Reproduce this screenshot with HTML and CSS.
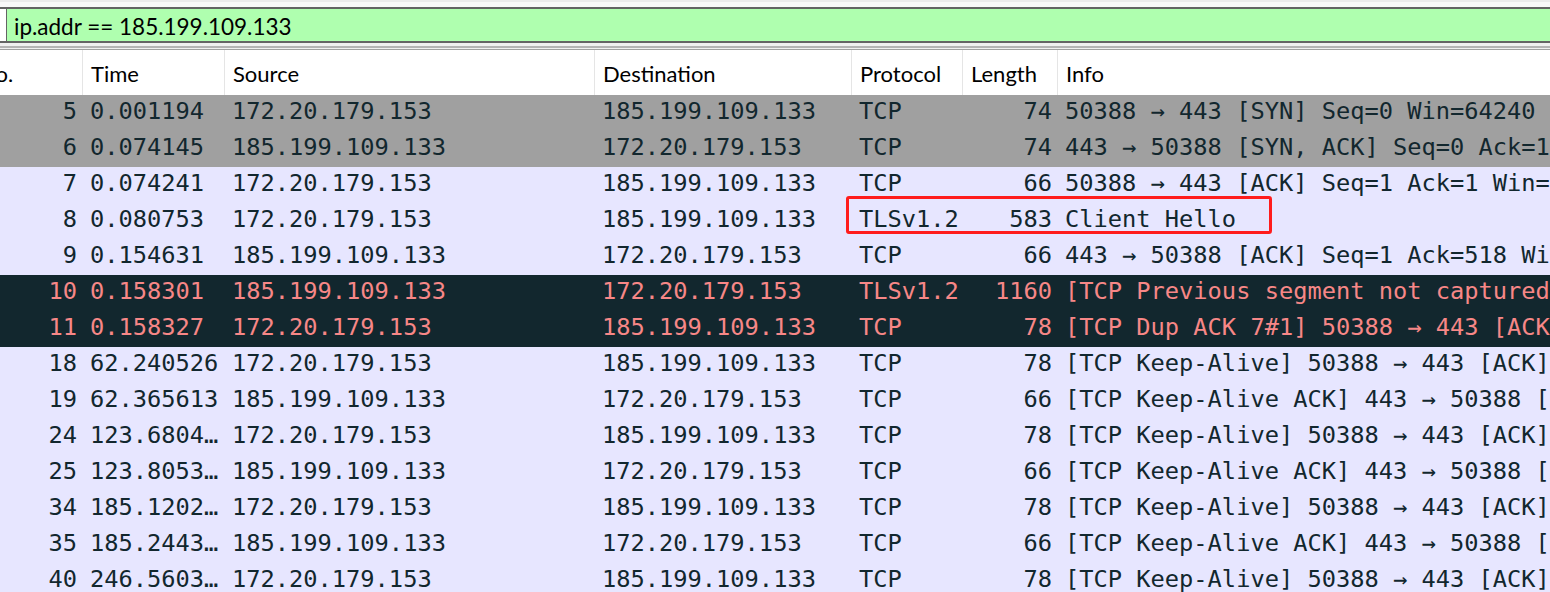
FILE: index.html
```html
<!DOCTYPE html>
<html>
<head>
<meta charset="utf-8">
<link rel="stylesheet" href="styles.css">
</head>
<body>
<div class="top-strip"></div>
<div class="filter-bar">
  <div class="filter-btn"></div>
  <div class="filter-input">ip.addr == 185.199.109.133</div>
</div>
<div class="splitter"></div>
<div class="packet-view">
  <div class="packet-table">
    <div class="hdr">
      <div class="c no">No.</div>
      <div class="c time">Time</div>
      <div class="c src">Source</div>
      <div class="c dst">Destination</div>
      <div class="c proto">Protocol</div>
      <div class="c len">Length</div>
      <div class="c info">Info</div>
    </div>
    <div class="row syn">
      <div class="c no">5</div><div class="c time">0.001194</div><div class="c src">172.20.179.153</div><div class="c dst">185.199.109.133</div><div class="c proto">TCP</div><div class="c len">74</div><div class="c info">50388 → 443 [SYN] Seq=0 Win=64240 Len=0 MSS=1460 WS=256 SACK_PERM=1</div>
    </div>
    <div class="row syn">
      <div class="c no">6</div><div class="c time">0.074145</div><div class="c src">185.199.109.133</div><div class="c dst">172.20.179.153</div><div class="c proto">TCP</div><div class="c len">74</div><div class="c info">443 → 50388 [SYN, ACK] Seq=0 Ack=1 Win=65535 Len=0 MSS=1460</div>
    </div>
    <div class="row tcp">
      <div class="c no">7</div><div class="c time">0.074241</div><div class="c src">172.20.179.153</div><div class="c dst">185.199.109.133</div><div class="c proto">TCP</div><div class="c len">66</div><div class="c info">50388 → 443 [ACK] Seq=1 Ack=1 Win=131328 Len=0</div>
    </div>
    <div class="row tcp">
      <div class="c no">8</div><div class="c time">0.080753</div><div class="c src">172.20.179.153</div><div class="c dst">185.199.109.133</div><div class="c proto">TLSv1.2</div><div class="c len">583</div><div class="c info">Client Hello</div>
    </div>
    <div class="row tcp">
      <div class="c no">9</div><div class="c time">0.154631</div><div class="c src">185.199.109.133</div><div class="c dst">172.20.179.153</div><div class="c proto">TCP</div><div class="c len">66</div><div class="c info">443 → 50388 [ACK] Seq=1 Ack=518 Win=66048 Len=0</div>
    </div>
    <div class="row bad">
      <div class="c no">10</div><div class="c time">0.158301</div><div class="c src">185.199.109.133</div><div class="c dst">172.20.179.153</div><div class="c proto">TLSv1.2</div><div class="c len">1160</div><div class="c info">[TCP Previous segment not captured] , Ignored Unknown Record</div>
    </div>
    <div class="row bad">
      <div class="c no">11</div><div class="c time">0.158327</div><div class="c src">172.20.179.153</div><div class="c dst">185.199.109.133</div><div class="c proto">TCP</div><div class="c len">78</div><div class="c info">[TCP Dup ACK 7#1] 50388 → 443 [ACK] Seq=518 Ack=1 Win=131328</div>
    </div>
    <div class="row tcp">
      <div class="c no">18</div><div class="c time">62.240526</div><div class="c src">172.20.179.153</div><div class="c dst">185.199.109.133</div><div class="c proto">TCP</div><div class="c len">78</div><div class="c info">[TCP Keep-Alive] 50388 → 443 [ACK] Seq=517 Ack=1 Win=131328</div>
    </div>
    <div class="row tcp">
      <div class="c no">19</div><div class="c time">62.365613</div><div class="c src">185.199.109.133</div><div class="c dst">172.20.179.153</div><div class="c proto">TCP</div><div class="c len">66</div><div class="c info">[TCP Keep-Alive ACK] 443 → 50388 [ACK] Seq=1 Ack=518 Win=66048</div>
    </div>
    <div class="row tcp">
      <div class="c no">24</div><div class="c time">123.6804…</div><div class="c src">172.20.179.153</div><div class="c dst">185.199.109.133</div><div class="c proto">TCP</div><div class="c len">78</div><div class="c info">[TCP Keep-Alive] 50388 → 443 [ACK] Seq=517 Ack=1 Win=131328</div>
    </div>
    <div class="row tcp">
      <div class="c no">25</div><div class="c time">123.8053…</div><div class="c src">185.199.109.133</div><div class="c dst">172.20.179.153</div><div class="c proto">TCP</div><div class="c len">66</div><div class="c info">[TCP Keep-Alive ACK] 443 → 50388 [ACK] Seq=1 Ack=518 Win=66048</div>
    </div>
    <div class="row tcp">
      <div class="c no">34</div><div class="c time">185.1202…</div><div class="c src">172.20.179.153</div><div class="c dst">185.199.109.133</div><div class="c proto">TCP</div><div class="c len">78</div><div class="c info">[TCP Keep-Alive] 50388 → 443 [ACK] Seq=517 Ack=1 Win=131328</div>
    </div>
    <div class="row tcp">
      <div class="c no">35</div><div class="c time">185.2443…</div><div class="c src">185.199.109.133</div><div class="c dst">172.20.179.153</div><div class="c proto">TCP</div><div class="c len">66</div><div class="c info">[TCP Keep-Alive ACK] 443 → 50388 [ACK] Seq=1 Ack=518 Win=66048</div>
    </div>
    <div class="row tcp">
      <div class="c no">40</div><div class="c time">246.5603…</div><div class="c src">172.20.179.153</div><div class="c dst">185.199.109.133</div><div class="c proto">TCP</div><div class="c len">78</div><div class="c info">[TCP Keep-Alive] 50388 → 443 [ACK] Seq=517 Ack=1 Win=131328</div>
    </div>
  </div>
  <div class="highlight"></div>
</div>
</body>
</html>
```

FILE: styles.css
```css
html, body {
  margin: 0;
  padding: 0;
  background: #ffffff;
}
body {
  width: 1550px;
  height: 592px;
  overflow: hidden;
}
.top-strip {
  height: 5px;
  border-top: 2px solid #ececec;
  background: #f9f9f9;
}
.filter-bar {
  display: flex;
  height: 32px;
  border-top: 2px solid #646464;
  border-bottom: 2px solid #646464;
}
.filter-btn {
  width: 6px;
  background: #ffffff;
  border-right: 1px solid #646464;
}
.filter-input {
  flex: 1;
  box-sizing: border-box;
  background: #afffaf;
  padding-left: 7px;
  padding-top: 2px;
  font-family: Lato, "Liberation Sans", sans-serif;
  font-size: 22.5px;
  line-height: 32px;
  color: #000;
  white-space: nowrap;
  overflow: hidden;
}
.splitter {
  height: 3px;
  background: #f0f0f0;
  border-bottom: 2px solid #b4b4b4;
  box-shadow: 0 1px 0 #f0f0f0, 0 2px 0 #a0a0a0;
  margin-bottom: 2px;
}
.packet-view {
  position: relative;
  overflow: hidden;
  height: 542px;
}
.packet-table {
  margin-left: -29px;
  width: 1579px;
}
.hdr {
  display: flex;
  height: 45px;
  background: #ffffff;
  font-family: Lato, "Liberation Sans", sans-serif;
  font-size: 22px;
  color: #000;
}
.hdr .c {
  display: flex;
  align-items: center;
  padding-left: 8px;
  padding-top: 2px;
  border-right: 1px solid #e5e5e5;
}
.hdr .c.info { border-right: none; }
.c {
  box-sizing: border-box;
  flex: none;
  white-space: nowrap;
  overflow: hidden;
}
.no { width: 112px; }
.time { width: 142px; }
.src { width: 370px; }
.dst { width: 257px; }
.proto { width: 111px; }
.len { width: 95px; }
.info { flex: 1; }
.row {
  display: flex;
  height: 36px;
  line-height: 32px;
  font-family: "DejaVu Sans Mono", "Liberation Mono", monospace;
  font-size: 23.7px;
}
.row .c { padding-left: 7px; }
.row .c.no, .row .c.len {
  text-align: right;
  padding-left: 0;
  padding-right: 6px;
}
.row.syn { background: #a0a0a0; color: #12272e; }
.row.tcp { background: #e7e6ff; color: #12272e; }
.row.bad { background: #12272e; color: #f78787; }
.highlight {
  position: absolute;
  left: 846px;
  top: 146px;
  width: 426px;
  height: 38px;
  box-sizing: border-box;
  border: 3px solid #ff1c1c;
  border-radius: 3px;
  pointer-events: none;
}
```
